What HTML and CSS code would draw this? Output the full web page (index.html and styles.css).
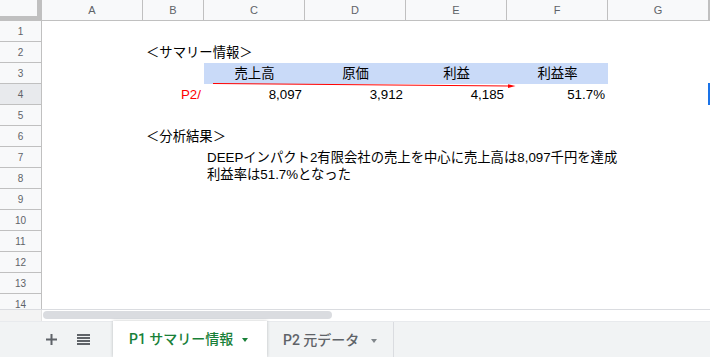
FILE: index.html
```html
<!DOCTYPE html>
<html lang="ja">
<head>
	<meta charset="utf-8" />
	<title>P1 サマリー情報</title>
	<link rel="stylesheet" href="styles.css">
</head>
<body>
    <div class="app">

        <!-- grid: row header, A..G, and the edge of H -->
        <div class="sheet">
            <div class="row head">
                <div class="corner"></div>
                <div class="col">A</div>
                <div class="col">B</div>
                <div class="col">C</div>
                <div class="col">D</div>
                <div class="col">E</div>
                <div class="col">F</div>
                <div class="col">G</div>
                <div class="col"></div>
            </div>

            <div class="row"><div class="rh">1</div></div>
            <div class="row">
                <div class="rh">2</div>
                <div class="c"></div>
                <div class="c">＜サマリー情報＞</div>
            </div>
            <div class="row">
                <div class="rh">3</div>
                <div class="c"></div>
                <div class="c"></div>
                <div class="c ctr fill">売上高</div>
                <div class="c ctr fill">原価</div>
                <div class="c ctr fill">利益</div>
                <div class="c ctr fill">利益率</div>
            </div>
            <div class="row">
                <div class="rh on">4</div>
                <div class="c"></div>
                <div class="c num red">P2/</div>
                <div class="c num">8,097</div>
                <div class="c num">3,912</div>
                <div class="c num">4,185</div>
                <div class="c num">51.7%</div>
            </div>
            <div class="row"><div class="rh">5</div></div>
            <div class="row">
                <div class="rh">6</div>
                <div class="c"></div>
                <div class="c">＜分析結果＞</div>
            </div>
            <div class="row">
                <div class="rh">7</div>
                <div class="c"></div>
                <div class="c"></div>
                <!-- two lines, the second spills into row 8 -->
                <div class="c note">DEEPインパクト2有限会社の売上を中心に売上高は8,097千円を達成<br>利益率は51.7%となった</div>
            </div>
            <div class="row"><div class="rh">8</div></div>
            <div class="row"><div class="rh">9</div></div>
            <div class="row"><div class="rh">10</div></div>
            <div class="row"><div class="rh">11</div></div>
            <div class="row"><div class="rh">12</div></div>
            <div class="row"><div class="rh">13</div></div>
            <div class="row"><div class="rh">14</div></div>

            <!-- drawing over the sheet -->
            <svg class="arrow" width="710" height="309" viewBox="0 0 710 309">
                <line x1="213" y1="83.5" x2="509" y2="86" stroke="#ff0000" stroke-width="1" />
                <polygon points="508,84.2 515.5,86.1 508,88" fill="#ff0000" />
            </svg>
            <div class="selection"></div>
        </div>

        <div class="hscroll">
            <div class="gutter"></div>
            <div class="thumb"></div>
        </div>

        <div class="tabs">
            <div class="tools">
                <svg class="icon" width="11" height="11" viewBox="0 0 11 11">
                    <rect x="4.5" y="0" width="2" height="11" fill="#5f6368" />
                    <rect x="0" y="4.5" width="11" height="2" fill="#5f6368" />
                </svg>
                <svg class="icon" width="13" height="11" viewBox="0 0 13 11">
                    <rect x="0" y="0" width="13" height="2" fill="#5f6368" />
                    <rect x="0" y="3" width="13" height="2" fill="#5f6368" />
                    <rect x="0" y="6" width="13" height="2" fill="#5f6368" />
                    <rect x="0" y="9" width="13" height="2" fill="#5f6368" />
                </svg>
            </div>
            <div class="tab active">
                <span>P1 サマリー情報</span>
                <i class="caret"></i>
            </div>
            <div class="tab">
                <span>P2 元データ</span>
                <i class="caret"></i>
            </div>
        </div>

    </div>
</body>
</html>
```

FILE: styles.css
```css
html, body {
    margin:0;
    padding:0;
    background:#fff;
}

.app {
    width:710px;
    height:357px;
    overflow:hidden;
    font-family:"Liberation Sans", "Noto Sans CJK JP", sans-serif;
}

/*Sheet grid*/
.sheet {
    position:relative;
    height:309px;
    overflow:hidden;
}

.row {
    display:grid;
    grid-template-columns:42px 101px 61px 101px 101px 101px 101px 101px 1fr;
    /*fixed track, long text spills over like in a sheet*/
    grid-template-rows:21px;
    height:21px;
}

.corner {
    background:#f8f9fa;
    border-right:5px solid #c0c0c0;
    border-bottom:5px solid #c0c0c0;
}

.col,
.rh {
    display:flex;
    align-items:center;
    justify-content:center;
    background:#f8f9fa;
    color:#5f6368;
    font-size:10px;
}
.col {
    border-right:1px solid #c0c0c0;
    border-bottom:1px solid #c0c0c0;
    font-size:11px;
}
.rh {
    border-right:1px solid #c0c0c0;
    border-bottom:1px solid #c0c0c0;
}
.rh.on {
    background:#e8eaed;
}

/*Cells, gridlines hidden, text sits on the bottom*/
.c {
    display:flex;
    align-items:flex-end;
    padding:0 3px 3px;
    font-size:13.33px;
    line-height:15px;
    color:#000;
    white-space:nowrap;
}
.num {justify-content:flex-end}
.ctr {justify-content:center}
.fill {background:#c9daf8}
.red {color:#ff0000}

.note {
    display:block;
    height:21px;
    box-sizing:border-box;
    padding:3px 3px 0;
    line-height:16.5px;
    overflow:visible;
}

.arrow {
    position:absolute;
    left:0;
    top:0;
    pointer-events:none;
}

.selection {
    position:absolute;
    left:708px;
    top:83px;
    width:2px;
    height:22px;
    background:#1a73e8;
}

/*Horizontal scroll strip*/
.hscroll {
    display:flex;
    height:12px;
    box-sizing:border-box;
    border-top:1px solid #dadce0;
}
.gutter {
    width:41px;
    background:#f3f3f3;
    border-right:1px solid #e3e3e3;
}
.thumb {
    width:289px;
    height:8px;
    margin:1px 0 0 1px;
    border-radius:4px;
    background:#dadce0;
}

/*Sheet tabs*/
.tabs {
    display:flex;
    height:36px;
    background:#f1f3f4;
    border-top:1px solid #e8eaed;
    box-sizing:border-box;
    font-family:Roboto, "Noto Sans CJK JP", sans-serif;
    font-size:14px;
    font-weight:500;
    line-height:20px;
}

.tools {
    display:flex;
    align-items:center;
    gap:20px;
    width:113px;
    padding-left:46px;
    box-sizing:border-box;
}
.icon {display:block}

.tab {
    display:flex;
    align-items:center;
    width:127px;
    padding-left:16px;
    box-sizing:border-box;
    color:#5f6368;
    border-right:1px solid #dadce0;
}
.tab.active {
    width:154px;
    margin-top:-1px;
    background:#fff;
    color:#188038;
    border-right:0;
    box-shadow:0 0 3px rgba(60,64,67,.3);
    position:relative;
}

.caret {
    display:block;
    width:0;
    height:0;
    margin:2px 0 0 12px;
    border-left:3.5px solid transparent;
    border-right:3.5px solid transparent;
    border-top:4px solid #80868b;
}
.tab.active .caret {
    margin-left:9px;
    border-top-color:#188038;
}
```
